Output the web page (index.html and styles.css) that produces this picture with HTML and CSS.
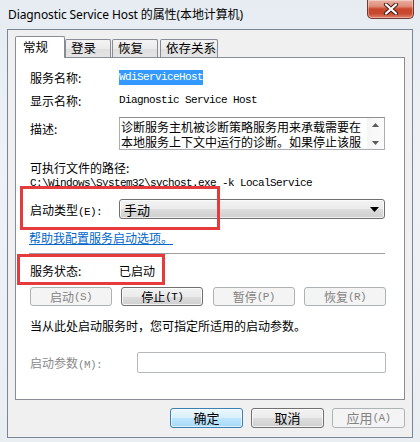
FILE: index.html
```html
<!DOCTYPE html>
<html lang="zh-CN">
<head>
<meta charset="utf-8">
<title>Diagnostic Service Host 的属性(本地计算机)</title>
<link rel="stylesheet" href="styles.css">
</head>
<body>
<div class="window">
  <div class="titlebar">
    <span class="title">Diagnostic Service Host 的属性(本地计算机)</span>
    <div class="close">
      <svg width="16" height="12" viewBox="0 0 16 12"><path d="M3 1.5 L13 10.5 M13 1.5 L3 10.5" stroke="#4a1f18" stroke-width="4.2" stroke-linecap="round"/><path d="M3 1.5 L13 10.5 M13 1.5 L3 10.5" stroke="#ffffff" stroke-width="2.2" stroke-linecap="round"/></svg>
    </div>
  </div>
  <div class="client">
    <div class="tabs">
      <div class="tab active">常规</div>
      <div class="tab t2">登录</div>
      <div class="tab t3">恢复</div>
      <div class="tab t4">依存关系</div>
    </div>
    <div class="panel">
      <div class="row r1"><span class="label">服务名称:</span><span class="mono sel">WdiServiceHost</span></div>
      <div class="row r2"><span class="label">显示名称:</span><span class="mono">Diagnostic Service Host</span></div>
      <div class="row r3">
        <span class="label top">描述:</span>
        <div class="desc">
          <div class="desc-text">
            <div class="dl">诊断服务主机被诊断策略服务用来承载需要在</div>
            <div class="dl">本地服务上下文中运行的诊断。如果停止该服</div>
          </div>
          <div class="vscroll">
            <svg width="7" height="4" viewBox="0 0 7 4"><path d="M0 4 L3.5 0 L7 4 Z" fill="#5a5a5a"/></svg>
            <svg width="7" height="4" viewBox="0 0 7 4"><path d="M0 0 L3.5 4 L7 0 Z" fill="#5a5a5a"/></svg>
          </div>
        </div>
      </div>
      <div class="row r4">可执行文件的路径:</div>
      <div class="row r5 mono">C:\Windows\System32\svchost.exe -k LocalService</div>
      <div class="row r6"><span class="label">启动类型<span class="mono">(E):</span></span>
        <div class="combo"><span>手动</span>
          <svg width="9" height="5" viewBox="0 0 9 5"><path d="M0 0 L9 0 L4.5 5 Z" fill="#000"/></svg>
        </div>
      </div>
      <div class="row r7"><a class="link" href="#">帮助我配置服务启动选项。</a></div>
      <div class="sep"></div>
      <div class="row r8"><span class="label">服务状态:</span><span>已启动</span></div>
      <div class="row r9">
        <button class="btn disabled">启动<span class="mono">(S)</span></button>
        <button class="btn">停止<span class="mono">(T)</span></button>
        <button class="btn disabled">暂停<span class="mono">(P)</span></button>
        <button class="btn disabled">恢复<span class="mono">(R)</span></button>
      </div>
      <div class="row r10">当从此处启动服务时，您可指定所适用的启动参数。</div>
      <div class="row r11"><span class="label wide gray">启动参数<span class="mono">(M):</span></span><div class="input"></div></div>
    </div>
    <div class="actions">
      <button class="btn default">确定</button>
      <button class="btn">取消</button>
      <button class="btn disabled">应用<span class="mono">(A)</span></button>
    </div>
  </div>
  <div class="mark m1"></div>
  <div class="mark m2"></div>
</div>
</body>
</html>
```
FILE: styles.css
```css
html, body {
  margin: 0;
  padding: 0;
}
body {
  width: 420px;
  height: 442px;
  overflow: hidden;
  font-family: "Noto Sans CJK SC", "Noto Sans", sans-serif;
  font-size: 12px;
  color: #000;
}
.window {
  position: relative;
  width: 420px;
  height: 442px;
  box-sizing: border-box;
  padding: 0 7px 5px 7px;
  background: linear-gradient(180deg, #e6ecf2 0%, #eef2f6 40%, #e9eef3 100%);
}
.titlebar {
  height: 29px;
  display: flex;
  justify-content: space-between;
  align-items: flex-start;
}
.title {
  font-family: "Noto Sans", "Noto Sans CJK SC", sans-serif;
  font-size: 12px;
  line-height: 16px;
  padding: 7px 0 0 1px;
  letter-spacing: -0.1px;
  color: #000;
}
.close {
  width: 45px;
  height: 18px;
  margin-right: -1px;
  border: 1px solid #6b3a32;
  border-top: none;
  border-radius: 0 0 5px 5px;
  background: linear-gradient(180deg, #e9b1a4 0%, #e08d78 35%, #c9462d 50%, #c74a2f 75%, #e0806a 100%);
  box-shadow: inset 0 0 0 1px rgba(255,255,255,0.35);
  display: flex;
  align-items: center;
  justify-content: center;
}
.client {
  height: 409px;
  box-sizing: border-box;
  border: 1px solid #7a8694;
  background: #f0f0f0;
  padding: 6px 7px 0 7px;
}
.tabs {
  display: flex;
  align-items: flex-end;
  height: 21px;
  position: relative;
  z-index: 1;
}
.tab {
  box-sizing: border-box;
  height: 18px;
  border: 1px solid #898c95;
  border-bottom: none;
  border-radius: 2px 2px 0 0;
  background: linear-gradient(180deg, #f3f3f3 0%, #ebebeb 50%, #dedede 50%, #e5e5e5 100%);
  padding: 0 0 0 5px;
  line-height: 16px;
  font-size: 12.5px;
  white-space: nowrap;
  overflow: hidden;
}
.tab.active {
  width: 50px;
  height: 22px;
  margin-bottom: -1px;
  background: #fff;
  padding: 2px 0 0 7px;
}
.t2 { width: 46px; }
.t3 { width: 46px; margin-left: 1px; }
.t4 { width: 58px; margin-left: 2px; }
.panel {
  height: 343px;
  width: 390px;
  box-sizing: border-box;
  border: 1px solid #898c95;
  background: #fff;
  padding: 0 18px 0 14px;
  display: flex;
  flex-direction: column;
}
.row {
  display: flex;
  align-items: center;
  height: 16px;
  white-space: nowrap;
  flex: none;
}
.label {
  width: 89px;
  flex: none;
}
.label.wide { width: 107px; }
.gray { color: #8a8a8a; }
.mono {
  font-family: "Liberation Mono", monospace;
  font-size: 11px;
  letter-spacing: -0.6px;
}
.sel {
  background: #3399ff;
  color: #fff;
  height: 15px;
  line-height: 15px;
}
.r1 { margin-top: 11px; }
.r2 { margin-top: 7px; }
.r3 { margin-top: 9px; height: 33px; align-items: flex-start; }
.label.top { padding-top: 3px; }
.desc {
  width: 266px;
  height: 33px;
  box-sizing: border-box;
  border: 1px solid #abadb3;
  border-top-color: #8e8f8f;
  display: flex;
  overflow: hidden;
}
.desc-text {
  flex: 1;
  padding: 1px 0 0 1px;
  height: 31px;
  box-sizing: border-box;
  font-size: 12px;
}
.dl {
  height: 15px;
  line-height: 15px;
  white-space: nowrap;
}
.vscroll {
  width: 17px;
  flex: none;
  background: linear-gradient(90deg, #f5f5f5, #fbfbfb);
  display: flex;
  flex-direction: column;
  justify-content: space-between;
  align-items: center;
  padding: 5px 0 4px;
  box-sizing: border-box;
}
.vscroll svg { display: block; }
.r4 { margin-top: 9px; }
.r5 { height: 15px; }
.r6 { margin-top: 9px; height: 20px; }
.combo {
  width: 266px;
  height: 20px;
  box-sizing: border-box;
  border: 1px solid #707070;
  border-radius: 3px;
  background: linear-gradient(180deg, #f2f2f2 0%, #ebebeb 50%, #dddddd 50%, #cfcfcf 100%);
  box-shadow: inset 0 0 0 1px rgba(255,255,255,0.7);
  display: flex;
  align-items: center;
  justify-content: space-between;
  padding: 0 5px 0 4px;
  font-size: 13px;
}
.r7 { margin-top: 10px; }
.link {
  color: #0066cc;
  text-decoration: underline;
  margin-left: -1px;
}
.sep {
  margin-top: 8px;
  height: 1px;
  background: #a0a0a0;
  border-bottom: 1px solid #fff;
  width: 356px;
  margin-left: -1px;
  flex: none;
}
.r8 { margin-top: 7px; }
.r9 {
  margin-top: 9px;
  height: 19px;
  justify-content: space-between;
  width: 356px;
}
.btn {
  box-sizing: border-box;
  height: 19px;
  width: 82px;
  padding: 0;
  margin: 0;
  border: 1px solid #707070;
  border-radius: 3px;
  background: linear-gradient(180deg, #f2f2f2 0%, #ebebeb 50%, #dddddd 50%, #cfcfcf 100%);
  box-shadow: inset 0 0 0 1px rgba(255,255,255,0.75);
  font-family: "Noto Sans CJK SC", sans-serif;
  font-size: 12px;
  color: #000;
  line-height: 16px;
  display: flex;
  align-items: center;
  justify-content: center;
}
.btn.disabled {
  border-color: #adb2b5;
  background: #f4f4f4;
  box-shadow: none;
  color: #838383;
}
.btn.default {
  border-color: #3c7fb1;
  background: linear-gradient(180deg, #eaf6fd 0%, #d9f0fc 50%, #bee6fd 50%, #a7d9f5 100%);
  box-shadow: inset 0 0 0 1px rgba(255,255,255,0.6);
}
.r10 { margin-top: 11px; }
.r11 { margin-top: 19px; height: 21px; }
.input {
  width: 249px;
  height: 21px;
  box-sizing: border-box;
  border: 1px solid #b4b8bc;
  border-radius: 2px;
  background: #fff;
}
.actions {
  display: flex;
  justify-content: flex-end;
  gap: 8px;
  margin-top: 8px;
}
.actions .btn {
  width: 73px;
  height: 20px;
  font-size: 13px;
}
.mark {
  position: absolute;
  border: 3px solid #e53b3d;
  box-sizing: border-box;
  pointer-events: none;
}
.m1 { left: 20px; top: 186px; width: 200px; height: 44px; }
.m2 { left: 17px; top: 254px; width: 148px; height: 31px; }
```
